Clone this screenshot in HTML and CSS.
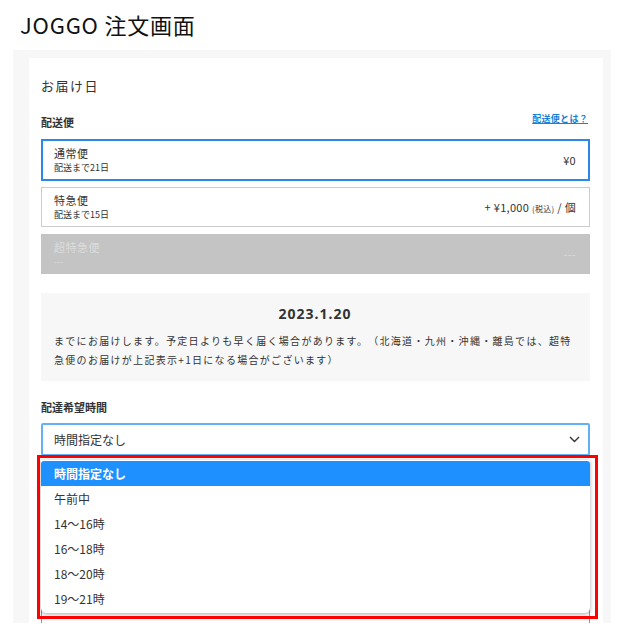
FILE: index.html
```html
<!DOCTYPE html>
<html lang="ja">
<head>
    <meta charset="UTF-8">
    <meta name="viewport" content="width=device-width, initial-scale=1.0">
    <title>JOGGO 注文画面</title>
    <link rel="stylesheet" href="styles.css">
</head>
<body>
    <h1 class="page-title">JOGGO 注文画面</h1>

    <div class="panel">
        <div class="card">
            <div class="section-title">お届け日</div>

            <div class="field-head">
                <span class="field-label">配送便</span>
                <a href="#" class="help-link">配送便とは？</a>
            </div>

            <!-- Delivery options -->
            <div class="ship-list">
                <div class="ship-option selected">
                    <div class="ship-text">
                        <div class="ship-name">通常便</div>
                        <div class="ship-days">配送まで21日</div>
                    </div>
                    <div class="ship-price">¥0</div>
                </div>
                <div class="ship-option">
                    <div class="ship-text">
                        <div class="ship-name">特急便</div>
                        <div class="ship-days">配送まで15日</div>
                    </div>
                    <div class="ship-price">+ ¥1,000 <small>(税込)</small> / 個</div>
                </div>
                <div class="ship-option disabled">
                    <div class="ship-text">
                        <div class="ship-name">超特急便</div>
                        <div class="ship-days">---</div>
                    </div>
                    <div class="ship-price">---</div>
                </div>
            </div>

            <div class="date-box">
                <div class="date">2023.1.20</div>
                <p class="date-note">までにお届けします。予定日よりも早く届く場合があります。（北海道・九州・沖縄・離島では、超特急便のお届けが上記表示+1日になる場合がございます）</p>
            </div>

            <div class="field-label time-label">配達希望時間</div>

            <div class="select-wrap">
                <div class="select">
                    <span>時間指定なし</span>
                    <svg class="chevron" width="11" height="7" viewBox="0 0 11 7">
                        <polyline points="1,1 5.5,5.5 10,1" fill="none" stroke="#333" stroke-width="1.4"/>
                    </svg>
                </div>

                <ul class="dropdown">
                    <li class="active">時間指定なし</li>
                    <li>午前中</li>
                    <li>14～16時</li>
                    <li>16～18時</li>
                    <li>18～20時</li>
                    <li>19～21時</li>
                </ul>

                <!-- annotation frame -->
                <div class="highlight"></div>
            </div>

            <!-- next field, hidden under the open list -->
            <div class="next-box"></div>
        </div>
    </div>
</body>
</html>
```

FILE: styles.css
```css
html, body {
    margin: 0;
    padding: 0;
    height: 100%;
    overflow: hidden;
}

body {
    background-color: white;
    font-family: "Noto Sans CJK JP", "Noto Sans", sans-serif;
    color: #333;
    text-spacing-trim: space-all;
}

.page-title {
    font-size: 22px;
    font-weight: normal;
    color: #111;
    margin: 0;
    padding: 9px 20px 11px;
    line-height: 30px;
    letter-spacing: 0.8px;
}

.panel {
    background-color: #f7f7f7;
    margin-left: 13px;
    width: 574px;
    height: 565px;
    padding: 8px 8px 0 16px;
    overflow: hidden;
}

.card {
    background-color: white;
    height: 100%;
    padding: 18px 13px 0 12px;
    box-sizing: border-box;
}

.section-title {
    font-size: 13px;
    line-height: 20px;
    letter-spacing: 1.5px;
}

.field-head {
    display: flex;
    justify-content: space-between;
    align-items: center;
    margin-top: 17px;
}

.field-label {
    font-size: 11px;
    font-weight: bold;
    line-height: 16px;
}

.help-link {
    font-size: 9px;
    line-height: 12px;
    color: #1a7fd6;
    font-weight: bold;
    letter-spacing: 0.3px;
    margin-right: 2px;
    margin-bottom: 5px;
}

.ship-list {
    display: flex;
    flex-direction: column;
    gap: 6px;
    margin-top: 9px;
}

.ship-option {
    display: flex;
    justify-content: space-between;
    align-items: center;
    height: 40px;
    box-sizing: border-box;
    border: 1px solid #ccc;
    padding: 0 13px 0 12px;
}

.ship-option.selected {
    height: 42px;
    border-color: #2a88e6;
    box-shadow: inset 0 0 0 1px #2a88e6;
}

.ship-option + .disabled {
    margin-top: 1px;
}

.ship-name {
    font-size: 11px;
    line-height: 15px;
    letter-spacing: 0.5px;
}

.ship-days {
    font-size: 9px;
    line-height: 14px;
}

.ship-price {
    font-size: 11px;
    letter-spacing: 0.3px;
}

.ship-price small {
    font-size: 8px;
}

.ship-option.disabled {
    background-color: #c4c4c4;
    border-color: #c4c4c4;
    color: #dcdcdc;
}

.date-box {
    background-color: #f7f7f7;
    margin-top: 19px;
    padding: 11px 14px 12px 13px;
}

.date {
    text-align: center;
    font-family: "Noto Sans", sans-serif;
    font-weight: bold;
    font-size: 14px;
    line-height: 20px;
    letter-spacing: 1px;
}

.date-note {
    margin: 7px 0 0;
    font-size: 10px;
    line-height: 19px;
    letter-spacing: 1.3px;
}

.time-label {
    margin-top: 18px;
}

.select-wrap {
    position: relative;
    margin-top: 8px;
}

.select {
    display: flex;
    justify-content: space-between;
    align-items: center;
    height: 33px;
    box-sizing: border-box;
    border: 2px solid #62b0f5;
    border-radius: 2px;
    padding: 0 8px 0 11px;
    font-size: 12px;
}

.dropdown {
    position: absolute;
    top: 37px;
    left: 0;
    right: 0;
    margin: 0;
    padding: 1px 0 2px;
    list-style: none;
    background-color: white;
    border-radius: 0 0 5px 5px;
    box-shadow: 0 1px 4px rgba(0, 0, 0, 0.35);
    z-index: 5;
}

.dropdown li {
    font-size: 12px;
    line-height: 25px;
    padding-left: 13px;
}

.dropdown li.active {
    background-color: #1e90ff;
    color: white;
    font-weight: bold;
    border-radius: 3px 3px 0 0;
}

.highlight {
    position: absolute;
    top: 32px;
    left: -4px;
    right: -8px;
    height: 158px;
    border: 3px solid #f00;
    z-index: 6;
}

.next-box {
    height: 60px;
    margin-top: 126px;
    border: 1px solid #8a9c98;
}
```
